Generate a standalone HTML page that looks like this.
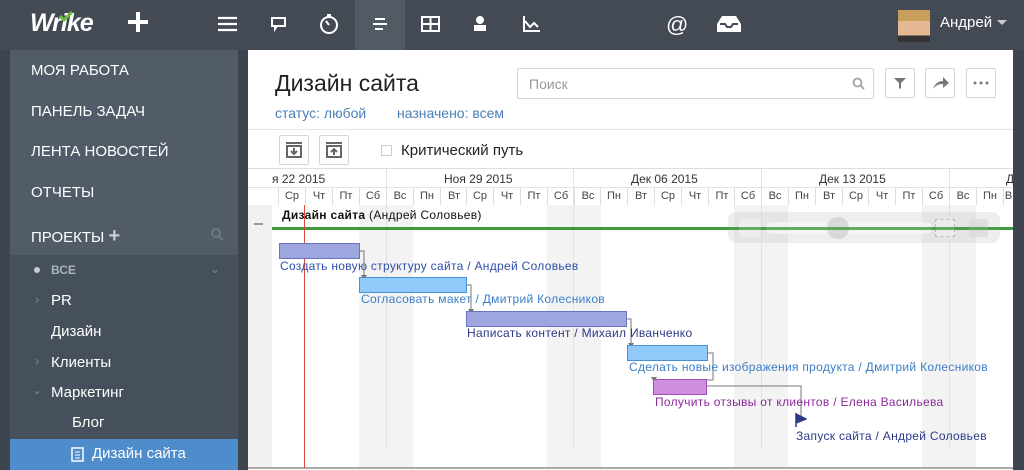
<!DOCTYPE html>
<html><head><meta charset="utf-8"><style>
*{box-sizing:border-box;margin:0;padding:0}
body{width:1024px;height:470px;overflow:hidden;background:#3e454f;font-family:"Liberation Sans","DejaVu Sans",sans-serif;position:relative}
.a{position:absolute}
.top{left:0;top:0;width:1024px;height:50px;background:#434a54}
.ic{color:#fff;font-size:20px}
.side{left:10px;top:50px;width:228px;height:420px;background:#46505c}
.sideTop{left:10px;top:50px;width:228px;height:205px;background:#515c68}
.si{color:#fff;font-size:15px;left:31px}
.sub{color:#fff;font-size:15px}
.main{left:248px;top:50px;width:765px;height:420px;background:#fff}
.day{top:187px;height:18px;font-size:11px;color:#444;text-align:center;line-height:18px;border-left:1px solid #ddd;width:27px}
.wk{top:205px;height:263px;background:#f3f3f3;width:54px}
.vl{top:187px;height:281px;width:1px;background:#e2e2e2}
.bar{height:16px}
.lbl{font-size:12px;white-space:nowrap;letter-spacing:0.3px}
.btn{width:30px;height:30px;border:1px solid #d6d6d6;border-radius:2px;background:#fff}
</style></head><body>
<div class="a top"></div>
<div class="a" style="left:30px;top:9px;font-size:25px;font-weight:bold;font-style:italic;color:#fff;letter-spacing:-1px">Wrike</div>
<svg class="a" style="left:58px;top:10px" width="16" height="12"><path d="M2 6 L6 10 L14 2" stroke="#6cbf3a" stroke-width="3" fill="none"/></svg>
<div class="a" style="left:128px;top:12px;width:20px;height:20px"><div class="a" style="left:8px;top:0;width:4px;height:20px;background:#fff"></div><div class="a" style="left:0;top:8px;width:20px;height:4px;background:#fff"></div></div>
<svg class="a" style="left:218px;top:16px" width="20" height="16"><path d="M0 2H19M0 8H19M0 14H19" stroke="#fff" stroke-width="2.2"/></svg>
<svg class="a" style="left:270px;top:16px" width="18" height="18"><path d="M2 2H15V10H7L5 13V10H2Z" stroke="#fff" stroke-width="2" fill="none"/></svg>
<svg class="a" style="left:318px;top:12px" width="22" height="24"><circle cx="11" cy="13" r="8" stroke="#fff" stroke-width="2" fill="none"/><path d="M11 13L8 9M9 3H13" stroke="#fff" stroke-width="2"/></svg>
<div class="a" style="left:355px;top:0;width:50px;height:50px;background:#525a64"></div>
<svg class="a" style="left:371px;top:17px" width="18" height="16"><path d="M4 2H14M2 7H16M4 12H12" stroke="#fff" stroke-width="2"/></svg>
<svg class="a" style="left:421px;top:16px" width="20" height="18"><rect x="1" y="1" width="17" height="14" stroke="#fff" stroke-width="2" fill="none"/><path d="M1 8H18M9.5 1V15" stroke="#fff" stroke-width="2"/></svg>
<svg class="a" style="left:472px;top:15px" width="16" height="18"><circle cx="8" cy="5" r="4" fill="#fff"/><rect x="2" y="10" width="12" height="6" fill="#fff"/></svg>
<svg class="a" style="left:522px;top:15px" width="20" height="18"><path d="M2 1V16H18M3 6L8 12L12 8L16 12" stroke="#fff" stroke-width="2" fill="none"/></svg>
<div class="a ic" style="left:666px;top:12px;font-size:22px">@</div>
<svg class="a" style="left:716px;top:14px" width="26" height="20"><path d="M6 2H20L25 10V18H1V10Z" fill="#fff"/><path d="M4 10H9L11 13H15L17 10H22" stroke="#434a54" stroke-width="2" fill="none"/></svg>
<div class="a" style="left:898px;top:10px;width:32px;height:32px;background:linear-gradient(#c79e5a 0 35%,#e3b892 35% 80%,#333 80%)"></div>
<div class="a" style="left:940px;top:14px;color:#fff;font-size:15px">Андрей</div>
<div class="a" style="left:997px;top:20px;width:0;height:0;border:5px solid transparent;border-top-color:#ccc"></div>

<div class="a side"></div><div class="a sideTop"></div>
<div class="a si" style="top:62px">МОЯ РАБОТА</div>
<div class="a si" style="top:103px">ПАНЕЛЬ ЗАДАЧ</div>
<div class="a si" style="top:143px">ЛЕНТА НОВОСТЕЙ</div>
<div class="a si" style="top:184px">ОТЧЕТЫ</div>
<div class="a si" style="top:225px">ПРОЕКТЫ <b style="font-size:20px;color:#ccd">+</b></div>
<svg class="a" style="left:210px;top:227px" width="14" height="14"><circle cx="6" cy="6" r="4" stroke="#6e7884" stroke-width="2" fill="none"/><path d="M9 9L13 13" stroke="#6e7884" stroke-width="2"/></svg>
<div class="a" style="left:34px;top:267px;width:6px;height:6px;border-radius:3px;background:#c8ccd2"></div>
<div class="a" style="left:51px;top:263px;color:#aab3c0;font-size:12px;font-weight:bold">ВСЕ</div>
<div class="a" style="left:210px;top:262px;color:#7b8591;font-size:12px">&#8964;</div>
<div class="a" style="left:35px;top:292px;color:#7b8591;font-size:13px">&#8250;</div>
<div class="a sub" style="left:51px;top:292px">PR</div>
<div class="a sub" style="left:51px;top:323px">Дизайн</div>
<div class="a" style="left:35px;top:353px;color:#7b8591;font-size:13px">&#8250;</div>
<div class="a sub" style="left:51px;top:354px">Клиенты</div>
<div class="a" style="left:32px;top:383px;color:#7b8591;font-size:12px">&#8964;</div>
<div class="a sub" style="left:51px;top:384px">Маркетинг</div>
<div class="a sub" style="left:72px;top:414px">Блог</div>
<div class="a" style="left:10px;top:439px;width:228px;height:31px;background:#4f8ccc"></div>
<svg class="a" style="left:71px;top:446px" width="13" height="16"><rect x="1" y="2" width="11" height="13" fill="none" stroke="#fff" stroke-width="1.5"/><path d="M4 6H9M4 9H9M4 12H9" stroke="#fff"/></svg>
<div class="a sub" style="left:92px;top:445px">Дизайн сайта</div>

<div class="a main"></div>
<div class="a" style="left:275px;top:70px;font-size:23px;color:#222">Дизайн сайта</div>
<div class="a" style="left:275px;top:105px;font-size:14px;color:#4a7fb5">статус: любой</div>
<div class="a" style="left:397px;top:105px;font-size:14px;color:#4a7fb5">назначено: всем</div>
<div class="a" style="left:517px;top:68px;width:357px;height:31px;border:1px solid #d6d6d6;border-radius:2px"></div>
<div class="a" style="left:529px;top:76px;font-size:14px;color:#999">Поиск</div>
<svg class="a" style="left:852px;top:77px" width="13" height="13"><circle cx="5.5" cy="5.5" r="4" stroke="#aaa" stroke-width="2" fill="none"/><path d="M8.5 8.5L12 12" stroke="#aaa" stroke-width="2"/></svg>
<div class="a btn" style="left:885px;top:68px"></div>
<svg class="a" style="left:893px;top:77px" width="14" height="13"><path d="M1 1H13L8 6V12L6 11V6Z" fill="#777"/></svg>
<div class="a btn" style="left:925px;top:68px"></div>
<svg class="a" style="left:931px;top:75px" width="20" height="16"><path d="M2 14C4 8 8 6 12 6V2L18 8L12 13V9C8 9 5 10 2 14Z" fill="#777"/></svg>
<div class="a btn" style="left:966px;top:68px"></div>
<svg class="a" style="left:973px;top:81px" width="16" height="4"><circle cx="2" cy="2" r="1.5" fill="#777"/><circle cx="8" cy="2" r="1.5" fill="#777"/><circle cx="14" cy="2" r="1.5" fill="#777"/></svg>
<div class="a" style="left:248px;top:129px;width:765px;height:1px;background:#e3e3e3"></div>
<div class="a btn" style="left:279px;top:135px"></div>
<svg class="a" style="left:285px;top:141px" width="18" height="18"><path d="M1 2H17M2 5H16V16H2Z" stroke="#666" stroke-width="2" fill="none"/><path d="M9 7V13M6 10L9 13L12 10" stroke="#666" stroke-width="2" fill="none"/></svg>
<div class="a btn" style="left:319px;top:135px"></div>
<svg class="a" style="left:325px;top:141px" width="18" height="18"><path d="M1 2H17M2 5H16V16H2Z" stroke="#666" stroke-width="2" fill="none"/><path d="M9 14V8M6 11L9 8L12 11" stroke="#666" stroke-width="2" fill="none"/></svg>
<div class="a" style="left:381px;top:145px;width:11px;height:11px;border:1px solid #ccc"></div>
<div class="a" style="left:401px;top:142px;font-size:15px;color:#222">Критический путь</div>

<!-- gantt -->
<div class="a" style="left:248px;top:168px;width:765px;height:1px;background:#ddd"></div>
<div class="a" style="left:248px;top:169px;width:765px;height:36px;background:#fff"></div>
<div class="a" style="left:248px;top:187px;width:765px;height:1px;background:#e2e2e2"></div>
<div class="a" style="left:248px;top:205px;width:24px;height:263px;background:#f0f0f0"></div>
<div class="a wk" style="left:359px"></div>
<div class="a wk" style="left:547px"></div>
<div class="a wk" style="left:734px"></div>
<div class="a wk" style="left:922px"></div>
<div class="a vl" style="left:386px;top:169px"></div><div class="a vl" style="left:573px;top:169px"></div><div class="a vl" style="left:761px;top:169px"></div><div class="a vl" style="left:949px;top:169px"></div>
<div class="a" style="left:272px;top:172px;font-size:12px;color:#333">я 22 2015</div>
<div class="a" style="left:444px;top:172px;font-size:12px;color:#333">Ноя 29 2015</div>
<div class="a" style="left:631px;top:172px;font-size:12px;color:#333">Дек 06 2015</div>
<div class="a" style="left:819px;top:172px;font-size:12px;color:#333">Дек 13 2015</div>
<div class="a" style="left:1006px;top:172px;font-size:12px;color:#333">Д</div>
<div class="a day" style="left:278px">Ср</div><div class="a day" style="left:305px">Чт</div><div class="a day" style="left:332px">Пт</div><div class="a day" style="left:359px">Сб</div>
<div class="a day" style="left:386px">Вс</div><div class="a day" style="left:413px">Пн</div><div class="a day" style="left:440px">Вт</div><div class="a day" style="left:466px">Ср</div><div class="a day" style="left:493px">Чт</div><div class="a day" style="left:520px">Пт</div><div class="a day" style="left:547px">Сб</div>
<div class="a day" style="left:574px">Вс</div><div class="a day" style="left:600px">Пн</div><div class="a day" style="left:627px">Вт</div><div class="a day" style="left:654px">Ср</div><div class="a day" style="left:681px">Чт</div><div class="a day" style="left:708px">Пт</div><div class="a day" style="left:734px">Сб</div>
<div class="a day" style="left:761px">Вс</div><div class="a day" style="left:788px">Пн</div><div class="a day" style="left:815px">Вт</div><div class="a day" style="left:842px">Ср</div><div class="a day" style="left:868px">Чт</div><div class="a day" style="left:895px">Пт</div><div class="a day" style="left:922px">Сб</div>
<div class="a day" style="left:949px">Вс</div><div class="a day" style="left:976px">Пн</div><div class="a day" style="left:1003px;width:10px">В</div>
<div class="a" style="left:248px;top:467px;width:765px;height:2px;background:#aaa"></div>

<div class="a lbl" style="left:282px;top:208px;color:#111"><b>Дизайн сайта</b> (Андрей Соловьев)</div>
<div class="a" style="left:254px;top:223px;width:9px;height:2px;background:#999"></div>
<div class="a" style="left:272px;top:227px;width:741px;height:3px;background:#3f9a3f"></div>
<div class="a" style="left:304px;top:205px;width:1px;height:263px;background:#d9473f"></div>

<!-- zoom control -->
<div class="a" style="left:728px;top:212px;width:272px;height:31px;border-radius:8px;background:rgba(200,200,200,0.3)"></div>
<div class="a" style="left:739px;top:219px;width:22px;height:18px;border-radius:3px;background:rgba(240,240,240,0.8)"></div>
<div class="a" style="left:766px;top:222px;width:166px;height:12px;border-radius:6px;background:rgba(248,248,248,0.7)"></div>
<div class="a" style="left:827px;top:217px;width:22px;height:22px;border-radius:11px;background:rgba(190,190,190,0.5)"></div>
<div class="a" style="left:935px;top:219px;width:20px;height:18px;border:1px dashed #bbb;background:rgba(240,240,240,0.7)"></div>
<div class="a" style="left:969px;top:219px;width:19px;height:18px;border-radius:3px;background:rgba(215,215,215,0.7)"></div>
<div class="a" style="left:728px;top:227px;width:272px;height:3px;background:rgba(63,154,63,0.75)"></div>

<!-- connectors -->
<svg class="a" style="left:248px;top:205px" width="765" height="263"><g stroke="#777" fill="none" stroke-width="1">
<path d="M112 46H116V72"/><path d="M219 80H223V106"/><path d="M379 114H383V140"/><path d="M460 148H465V175H406V174"/><path d="M459 181H553V212"/></g>
<g fill="#777"><path d="M113 70H119L116 75Z"/><path d="M220 104H226L223 109Z"/><path d="M380 138H386L383 143Z"/><path d="M403 172H409L406 177Z"/></g></svg>

<div class="a bar" style="left:279px;top:243px;width:81px;background:#9ea6e0;border:1px solid #6973c2"></div>
<div class="a lbl" style="left:280px;top:259px;color:#2f4ea8">Создать новую структуру сайта / Андрей Соловьев</div>
<div class="a bar" style="left:359px;top:277px;width:108px;background:#90cafa;border:1px solid #4a8fd4"></div>
<div class="a lbl" style="left:361px;top:292px;color:#3b7ec6">Согласовать макет / Дмитрий Колесников</div>
<div class="a bar" style="left:466px;top:311px;width:161px;background:#9ea6e0;border:1px solid #6973c2"></div>
<div class="a lbl" style="left:467px;top:326px;color:#2c3a86">Написать контент / Михаил Иванченко</div>
<div class="a bar" style="left:627px;top:345px;width:81px;background:#90cafa;border:1px solid #4a8fd4"></div>
<div class="a lbl" style="left:629px;top:360px;color:#3b7ec6">Сделать новые изображения продукта / Дмитрий Колесников</div>
<div class="a bar" style="left:653px;top:379px;width:54px;background:#d08ede;border:1px solid #a24fb8"></div>
<div class="a lbl" style="left:655px;top:395px;color:#8a2a98">Получить отзывы от клиентов / Елена Васильева</div>
<svg class="a" style="left:795px;top:413px" width="12" height="14"><path d="M1 0V14M1 1L11 6L1 10Z" fill="#2c3a86" stroke="#2c3a86" stroke-width="1.5"/></svg>
<div class="a lbl" style="left:796px;top:429px;color:#2c3a86">Запуск сайта / Андрей Соловьев</div>
</body></html>
